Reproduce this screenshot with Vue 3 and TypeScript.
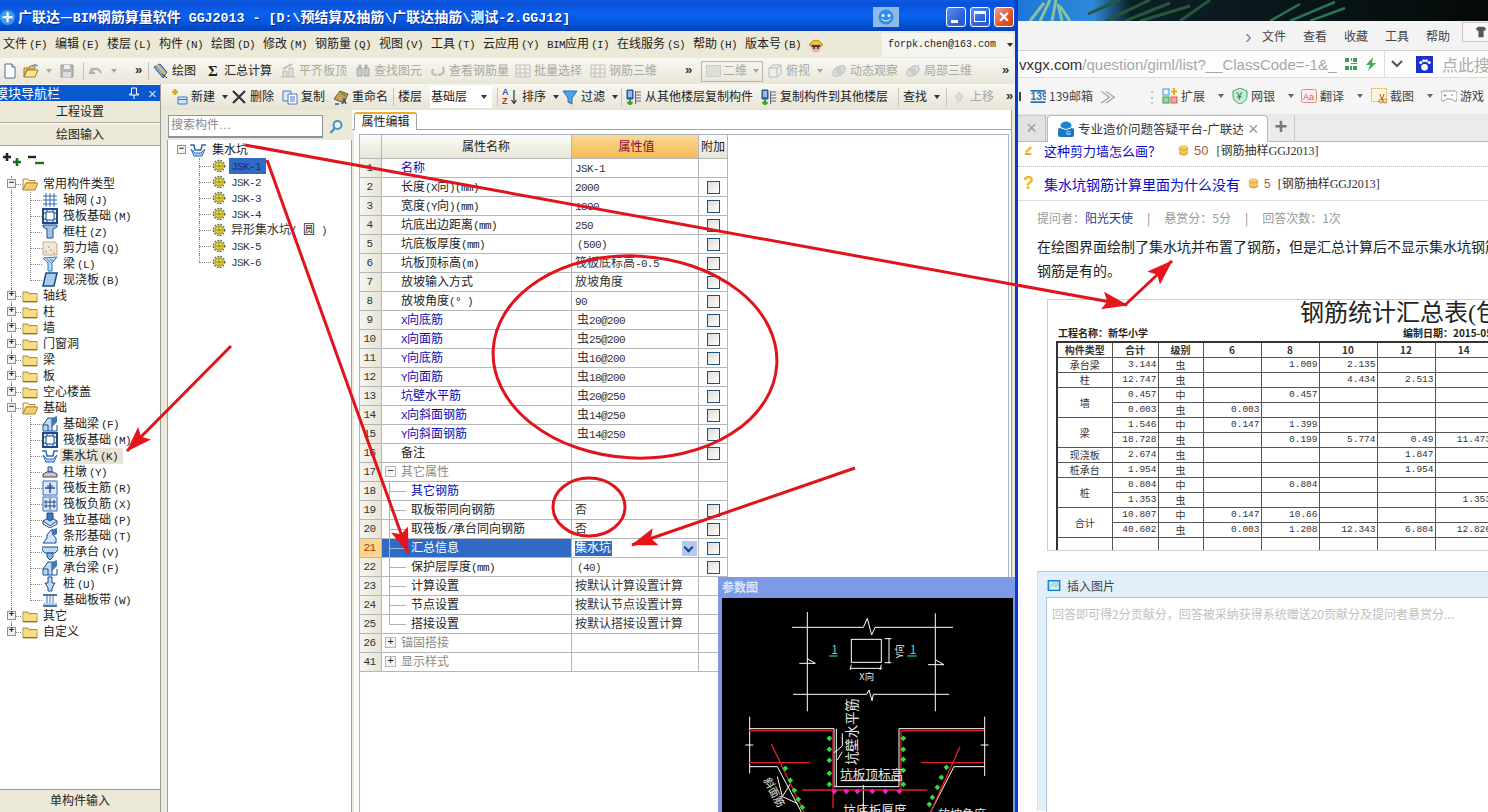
<script setup lang="ts">
interface Bar { x: number; icon?: string; label?: string; caret?: boolean; grey?: boolean; sep?: boolean; chev?: boolean; glyph?: string; combo?: string; sort?: boolean }
const widths = (items: Bar[], end: number) =>
  items.map((it, i) => ({ ...it, w: (i + 1 < items.length ? items[i + 1].x : end) - it.x }))
const seg = (s = '') =>
  s.split(/([\x20-\x7e°]+)/).filter(Boolean).map((t) => ({ t, lat: /^[\x20-\x7e°]/.test(t) }))

const menus = [
  { t: '文件', k: '(F)', x: 3 }, { t: '编辑', k: '(E)', x: 55 }, { t: '楼层', k: '(L)', x: 107 },
  { t: '构件', k: '(N)', x: 159 }, { t: '绘图', k: '(D)', x: 211 }, { t: '修改', k: '(M)', x: 263 },
  { t: '钢筋量', k: '(Q)', x: 315 }, { t: '视图', k: '(V)', x: 379 }, { t: '工具', k: '(T)', x: 431 },
  { t: '云应用', k: '(Y)', x: 483 }, { t: 'BIM应用', k: '(I)', x: 547 }, { t: '在线服务', k: '(S)', x: 617 },
  { t: '帮助', k: '(H)', x: 693 }, { t: '版本号', k: '(B)', x: 745 }
].map((m, i, a) => ({ ...m, w: (i + 1 < a.length ? a[i + 1].x : 807) - m.x }))

const bar1 = widths([
  { x: 2, icon: 'doc' }, { x: 23, icon: 'open', caret: true }, { x: 59, icon: 'save', grey: true },
  { x: 88, icon: 'undo', caret: true, grey: true, sep: true }, { x: 135, chev: true },
  { x: 153, icon: 'draw', label: '绘图', sep: true }, { x: 205, glyph: 'Σ', label: '汇总计算' },
  { x: 280, icon: 'align', label: '平齐板顶', grey: true }, { x: 355, icon: 'find', label: '查找图元', grey: true },
  { x: 430, icon: 'look', label: '查看钢筋量', grey: true }, { x: 515, icon: 'batch', label: '批量选择', grey: true },
  { x: 590, icon: 'batch', label: '钢筋三维', grey: true }, { x: 685, chev: true },
  { x: 701, combo: '二维' }, { x: 767, icon: 'cube', label: '俯视', caret: true, grey: true },
  { x: 831, icon: 'orbit', label: '动态观察', grey: true }, { x: 905, icon: 'orbit', label: '局部三维', grey: true },
  { x: 1002, chev: true }
], 1015)

const bar2 = widths([
  { x: 172, icon: 'add', label: '新建', caret: true }, { x: 231, icon: 'del', label: '删除' },
  { x: 282, icon: 'copy', label: '复制' }, { x: 333, icon: 'rename', label: '重命名' },
  { x: 398, label: '楼层', sep: true },
  { x: 430, combo: '基础层' },
  { x: 502, sort: true, label: '排序', caret: true, sep: true },
  { x: 562, icon: 'funnel', label: '过滤', caret: true },
  { x: 626, icon: 'floors', label: '从其他楼层复制构件', sep: true },
  { x: 761, icon: 'floors', label: '复制构件到其他楼层' },
  { x: 903, label: '查找', caret: true, sep: true },
  { x: 951, icon: 'up', label: '上移', grey: true, sep: true },
  { x: 1006, chev: true }
], 1015)

const navTree = [
  { t: '常用构件类型', open: true, lv: 0 },
  { t: '轴网', k: '(J)', icon: 'grid', lv: 1 }, { t: '筏板基础', k: '(M)', icon: 'raft', lv: 1 },
  { t: '框柱', k: '(Z)', icon: 'col', lv: 1 }, { t: '剪力墙', k: '(Q)', icon: 'wall', lv: 1 },
  { t: '梁', k: '(L)', icon: 'beam', lv: 1 }, { t: '现浇板', k: '(B)', icon: 'slab', lv: 1, last: true },
  { t: '轴线', lv: 0 }, { t: '柱', lv: 0 }, { t: '墙', lv: 0 }, { t: '门窗洞', lv: 0 }, { t: '梁', lv: 0 },
  { t: '板', lv: 0 }, { t: '空心楼盖', lv: 0 }, { t: '基础', open: true, lv: 0 },
  { t: '基础梁', k: '(F)', icon: 'fbeam', lv: 1 }, { t: '筏板基础', k: '(M)', icon: 'raft', lv: 1 },
  { t: '集水坑', k: '(K)', icon: 'pit', lv: 1, sel: true }, { t: '柱墩', k: '(Y)', icon: 'pier', lv: 1 },
  { t: '筏板主筋', k: '(R)', icon: 'main', lv: 1 }, { t: '筏板负筋', k: '(X)', icon: 'neg', lv: 1 },
  { t: '独立基础', k: '(P)', icon: 'iso', lv: 1 }, { t: '条形基础', k: '(T)', icon: 'strip', lv: 1 },
  { t: '桩承台', k: '(V)', icon: 'cap', lv: 1 }, { t: '承台梁', k: '(F)', icon: 'fbeam', lv: 1 },
  { t: '桩', k: '(U)', icon: 'pile', lv: 1 }, { t: '基础板带', k: '(W)', icon: 'band', lv: 1, last: true },
  { t: '其它', lv: 0 }, { t: '自定义', lv: 0, end: true }
]

const parts = ['JSK-1', 'JSK-2', 'JSK-3', 'JSK-4', '异形集水坑( 圆 )', 'JSK-5', 'JSK-6']

interface Row { n: number; name: string; val?: string; blue?: boolean; chk?: boolean; ind?: boolean; group?: string; pad?: boolean; last?: boolean }
const rows: Row[] = [
  { n: 1, name: '名称', val: 'JSK-1', blue: true },
  { n: 2, name: '长度(X向)(mm)', val: '2000', chk: true },
  { n: 3, name: '宽度(Y向)(mm)', val: '1800', chk: true },
  { n: 4, name: '坑底出边距离(mm)', val: '250', chk: true },
  { n: 5, name: '坑底板厚度(mm)', val: '(500)', chk: true, pad: true },
  { n: 6, name: '坑板顶标高(m)', val: '筏板底标高-0.5', chk: true },
  { n: 7, name: '放坡输入方式', val: '放坡角度', chk: true },
  { n: 8, name: '放坡角度(° )', val: '90', chk: true },
  { n: 9, name: 'X向底筋', val: '虫20@200', blue: true, chk: true, pad: true },
  { n: 10, name: 'X向面筋', val: '虫25@200', blue: true, chk: true, pad: true },
  { n: 11, name: 'Y向底筋', val: '虫16@200', blue: true, chk: true, pad: true },
  { n: 12, name: 'Y向面筋', val: '虫18@200', blue: true, chk: true, pad: true },
  { n: 13, name: '坑壁水平筋', val: '虫20@250', blue: true, chk: true, pad: true },
  { n: 14, name: 'X向斜面钢筋', val: '虫14@250', blue: true, chk: true, pad: true },
  { n: 15, name: 'Y向斜面钢筋', val: '虫14@250', blue: true, chk: true, pad: true },
  { n: 16, name: '备注', chk: true },
  { n: 17, name: '其它属性', group: '−' },
  { n: 18, name: '其它钢筋', blue: true, ind: true },
  { n: 19, name: '取板带同向钢筋', val: '否', ind: true, chk: true },
  { n: 20, name: '取筏板/承台同向钢筋', val: '否', ind: true, chk: true },
  { n: 21, name: '汇总信息', val: '集水坑', ind: true, chk: true },
  { n: 22, name: '保护层厚度(mm)', val: '(40)', ind: true, chk: true, pad: true },
  { n: 23, name: '计算设置', val: '按默认计算设置计算', ind: true },
  { n: 24, name: '节点设置', val: '按默认节点设置计算', ind: true },
  { n: 25, name: '搭接设置', val: '按默认搭接设置计算', ind: true, last: true },
  { n: 26, name: '锚固搭接', group: '+' },
  { n: 41, name: '显示样式', group: '+' }
]

const stat = [
  { a: '承台梁', s: 1, t: '3.144', g: '虫', v: ['', '1.009', '2.135', '', ''] },
  { a: '柱', s: 1, t: '12.747', g: '虫', v: ['', '', '4.434', '2.513', ''] },
  { a: '墙', s: 2, t: '0.457', g: '中', v: ['', '0.457', '', '', ''] },
  { t: '0.003', g: '虫', v: ['0.003', '', '', '', ''] },
  { a: '梁', s: 2, t: '1.546', g: '中', v: ['0.147', '1.399', '', '', ''] },
  { t: '18.728', g: '虫', v: ['', '0.199', '5.774', '0.49', '11.473'] },
  { a: '现浇板', s: 1, t: '2.674', g: '虫', v: ['', '', '', '1.847', ''] },
  { a: '桩承台', s: 1, t: '1.954', g: '虫', v: ['', '', '', '1.954', ''] },
  { a: '桩', s: 2, t: '8.804', g: '中', v: ['', '8.804', '', '', ''] },
  { t: '1.353', g: '虫', v: ['', '', '', '', '1.353'] },
  { a: '合计', s: 2, t: '10.807', g: '中', v: ['0.147', '10.66', '', '', ''] },
  { t: '40.602', g: '虫', v: ['0.003', '1.208', '12.343', '6.804', '12.826'] }
]

const greenDots = [[346,505],[346,538],[346,571],[346,610],[346,643],[568,505],[568,538],[568,568],[568,601],[568,643],[214,595],[229,631],[241,661],[253,688],[265,712],[697,592],[682,622],[670,652],[655,682],[646,703]]
const pinkDots = [[361,664],[397,664],[430,664],[475,664],[514,664],[556,664]]
const fronds = [
  'M1030 21 L1044 3 M1040 21 L1050 0 M1052 21 L1056 0 M1062 21 L1058 4 M1070 21 L1060 6',
  'M1105 21 L1150 0 M1125 21 L1170 3 M1140 21 L1190 6 M1180 21 L1210 0 M1088 14 L1120 0',
  'M1270 21 L1300 4 M1290 21 L1335 2 M1310 21 L1345 8'
]
</script>

<template>
  <div class="app">
    <svg class="defs" aria-hidden="true">
      <symbol id="doc" viewBox="0 0 16 16"><path d="M3 1h7l3 3v11H3z" fill="#fff" stroke="#5a6a8a"/><path d="M10 1v3h3" fill="#dde" stroke="#5a6a8a"/></symbol>
      <symbol id="open" viewBox="0 0 16 16"><path d="M1 5h5l1-2h5v3H4L1 14z" fill="#f6d676" stroke="#a07820"/><path d="M1 14l3-7h11l-3 7z" fill="#fbe596" stroke="#a07820"/><path d="M9 3q3-3 6 0" fill="none" stroke="#2a7ad0"/></symbol>
      <symbol id="save" viewBox="0 0 16 16"><path d="M2 2h12v12H2z" fill="#b8b8b8" stroke="#999"/><path d="M5 2h6v4H5z" fill="#eee"/><path d="M4 9h8v5H4z" fill="#ddd"/></symbol>
      <symbol id="undo" viewBox="0 0 16 16"><path d="M4 5l-2 5 5 0M3 9c3-5 8-4 10 1" fill="none" stroke="#b0b0b0" stroke-width="2"/></symbol>
      <symbol id="draw" viewBox="0 0 16 16"><path d="M1 4l6-3 7 8-4 6z" fill="#7fa6d8" stroke="#2e5b98"/><path d="M4 2l8 9" stroke="#e8c050" stroke-width="2"/><path d="M9 11l5 4" stroke="#333"/></symbol>
      <symbol id="align" viewBox="0 0 16 16"><path d="M1 14h14M3 14V8h4v6M9 14V5h4v9" fill="#ddd" stroke="#bbb"/><path d="M3 6l9-5" stroke="#bbb" stroke-width="2"/></symbol>
      <symbol id="find" viewBox="0 0 16 16"><path d="M2 5h5v8H2zM9 5h5v8H9zM4 2h2v3H4zM10 2h2v3h-2z" fill="#c8c8c8" stroke="#aaa"/></symbol>
      <symbol id="look" viewBox="0 0 16 16"><path d="M3 6q-3 6 4 6M13 4q3 7-5 8" fill="none" stroke="#b8b8b8" stroke-width="2"/></symbol>
      <symbol id="batch" viewBox="0 0 16 16"><path d="M1 2h14v12H1zM1 6h14M1 10h14M5 2v12M10 2v12" fill="none" stroke="#c0c0c0"/></symbol>
      <symbol id="cube" viewBox="0 0 16 16"><path d="M2 5l4-3h8v9l-4 3H2zM2 5h8v9M10 5l4-3" fill="#eee" stroke="#bbb"/></symbol>
      <symbol id="orbit" viewBox="0 0 16 16"><ellipse cx="8" cy="8" rx="7" ry="4" fill="#ddd" stroke="#bbb" transform="rotate(-35 8 8)"/><circle cx="8" cy="8" r="3" fill="#ccc"/></symbol>
      <symbol id="add" viewBox="0 0 16 16"><path d="M6 8h9v7H6z" fill="#cfe3fa" stroke="#4a78b8"/><path d="M6 10.500h9" stroke="#4a78b8"/><path d="M3 0v6M0 3h6" stroke="#d8a820" stroke-width="2.500"/></symbol>
      <symbol id="del" viewBox="0 0 16 16"><path d="M2 2l12 12M14 2L2 14" stroke="#333" stroke-width="2.200"/></symbol>
      <symbol id="copy" viewBox="0 0 16 16"><path d="M1 2h8v10H1z" fill="#dfe9f8" stroke="#4a78b8"/><path d="M6 5h9v10H6z" fill="#fff" stroke="#4a78b8"/><path d="M8 8h5M8 10h5M8 12h5" stroke="#4a78b8"/></symbol>
      <symbol id="rename" viewBox="0 0 16 16"><path d="M1 10l6-8 8 3-4 9z" fill="#c8a058" stroke="#7a5a20"/><path d="M8 4l5 3" stroke="#5a9a40" stroke-width="2"/><path d="M9 15l2-5 2 5M2 15h4" stroke="#2e5b98" fill="none" stroke-width="1.500"/></symbol>
      <symbol id="funnel" viewBox="0 0 16 16"><path d="M1 2h14L10 9v6l-4-2V9z" fill="#4ea4e8" stroke="#2a6ab0"/></symbol>
      <symbol id="floors" viewBox="0 0 16 16"><path d="M1 1h6v9H1z" fill="#3a72c0" stroke="#234f90"/><path d="M2 3h4M2 5h4M2 7h4" stroke="#fff"/><path d="M10 3h5M10 6h5M10 9h5M10 12h5M9.500 2v13" stroke="#667" fill="none"/><path d="M4 10v5M1.500 13l2.500 2.500 2.500-2.500" stroke="#3aa030" fill="none" stroke-width="2"/></symbol>
      <symbol id="up" viewBox="0 0 16 16"><path d="M8 3l4 5H10v4H6V8H4z" fill="#ddd" stroke="#ccc"/></symbol>
      <symbol id="folder" viewBox="0 0 16 16"><path d="M1 4h5l1 1.500h8V14H1z" fill="#f3d377" stroke="#a88a40"/><path d="M1.500 6h13v7.500h-13z" fill="#f8da80"/><path d="M1 13.500h14" stroke="#9a7020"/></symbol>
      <symbol id="folderOpen" viewBox="0 0 16 16"><path d="M1 3h5l1 1.500h6V7H4l-3 7z" fill="#fff4c8" stroke="#a88a40"/><path d="M1 14l3-7h12l-3 7z" fill="#f4cc68" stroke="#a88a40"/></symbol>
      <symbol id="grid" viewBox="0 0 16 16"><path d="M1 4h14M1 8h14M1 12h14M4 1v14M8 1v14M12 1v14" stroke="#2e6ab8" fill="none"/></symbol>
      <symbol id="raft" viewBox="0 0 16 16"><path d="M1 1h14v14H1z" fill="#e4ecf8" stroke="#1e4a88" stroke-width="2"/><path d="M4 4h8v8H4zM1 5h3M1 11h3M12 5h3M12 11h3M5 1v3M11 1v3M5 12v3M11 12v3" fill="#fff" stroke="#1e4a88"/></symbol>
      <symbol id="col" viewBox="0 0 16 16"><path d="M1 1h14v2l-4 2v9H5V5L1 3z" fill="#9ec4ec" stroke="#1e4a88"/></symbol>
      <symbol id="wall" viewBox="0 0 16 16"><path d="M1 2h12l2 2v11H1z" fill="#f6e4d4" stroke="#c8a890"/><path d="M3 12h2M8 10h2M11 13h2M6 7h2" stroke="#8a9ab0"/></symbol>
      <symbol id="beam" viewBox="0 0 16 16"><path d="M1 2l14-1-5 6v8H6V7z" fill="#bcdaf4" stroke="#3a78b8"/><path d="M8 3l4 3M5 3l4 4" stroke="#3a78b8"/></symbol>
      <symbol id="slab" viewBox="0 0 16 16"><path d="M4 1h11l-3 13H1z" fill="#a6cef0" stroke="#1e4a88" stroke-width="1.500"/></symbol>
      <symbol id="fbeam" viewBox="0 0 16 16"><path d="M1 15V9l5-7h4v13z" fill="#bcdaf4" stroke="#1e4a88"/><path d="M10 2l5-2v6l-5 5" fill="#3a78b8"/><path d="M6 15V9h-5M10 15h5V9" fill="none" stroke="#1e4a88"/></symbol>
      <symbol id="pit" viewBox="0 0 16 16"><path d="M0 3h4l1 5h6l1-5h4" fill="none" stroke="#2e6ab8" stroke-width="1.500"/><path d="M1 7l3 7h8l3-7-4 4H5z" fill="#a6cef0" stroke="#2e6ab8"/></symbol>
      <symbol id="pier" viewBox="0 0 16 16"><path d="M6 3h4v5H6z" fill="#a8c4e4" stroke="#234f90"/><path d="M1 10l4-2h6l4 2v3H1z" fill="#c8c8c8" stroke="#445"/></symbol>
      <symbol id="main" viewBox="0 0 16 16"><path d="M1 1h14v14H1z" fill="#dce8f8" stroke="#2e6ab8"/><path d="M8 3v10M3 8h10" stroke="#1e4a88" stroke-width="1.400"/><path d="M5 6h6" stroke="#1e4a88"/></symbol>
      <symbol id="neg" viewBox="0 0 16 16"><path d="M1 1h14v14H1z" fill="#dce8f8" stroke="#2e6ab8"/><path d="M8 2v12M2 6h12M2 10h12M4 4v8M12 4v8" stroke="#1e4a88"/></symbol>
      <symbol id="iso" viewBox="0 0 16 16"><path d="M1 9l7-4 7 4-7 5z" fill="#bcdaf4" stroke="#1e4a88"/><path d="M1 9v3l7 4 7-4V9" fill="none" stroke="#1e4a88"/><path d="M5 1h6v6L8 9 5 7z" fill="#3a78b8" stroke="#1e4a88"/></symbol>
      <symbol id="strip" viewBox="0 0 16 16"><path d="M1 15l4-5V7l4-5h2v5l3 3v5z" fill="#cfe3fa" stroke="#1e4a88"/><path d="M9 2l6-2v6l-4 2" fill="#3a78b8"/></symbol>
      <symbol id="cap" viewBox="0 0 16 16"><path d="M0 3h16v3l-3 3H3L0 6z" fill="#bcdaf4" stroke="#1e4a88"/><path d="M5 9h6v4l-3 3-3-3z" fill="#88b0dc" stroke="#1e4a88"/></symbol>
      <symbol id="pile" viewBox="0 0 16 16"><path d="M6 1h4v6h3l-3 5v3H6v-3L3 7h3z" fill="#bcdaf4" stroke="#1e4a88"/></symbol>
      <symbol id="band" viewBox="0 0 16 16"><path d="M1 3h14M1 14h14" stroke="#1e4a88" stroke-width="1.500"/><path d="M5 3v11M8 3v11M11 3v11" stroke="#2e6ab8"/><path d="M1 12h14" stroke="#a6cef0" stroke-width="2"/></symbol>
      <symbol id="gear" viewBox="0 0 16 16"><circle cx="8" cy="8" r="6.500" fill="none" stroke="#5a6a2a" stroke-width="1.500" stroke-dasharray="2 1.500"/><circle cx="8" cy="8" r="4.800" fill="#eedc30" stroke="#6a6a20"/><path d="M4 8h8M8 4v8" stroke="#8a7a20"/></symbol>
      <symbol id="coin" viewBox="0 0 16 16"><ellipse cx="8" cy="4" rx="6" ry="2.500" fill="#fce7a0" stroke="#d09020"/><path d="M2 4v8c0 3.400 12 3.400 12 0V4" fill="#f4b840" stroke="#d09020"/><path d="M2 8c0 3.400 12 3.400 12 0" fill="none" stroke="#fff0b0"/></symbol>
    </svg>

    <!-- 软件窗口 -->
    <section class="win">
      <header class="title">
        <span class="logo">✛</span>
        <span class="title-text">广联达—<b class="mono">BIM</b>钢筋算量软件<b class="mono"> GGJ2013 - [D:\</b>预结算及抽筋<b class="mono">\</b>广联达抽筋<b class="mono">\</b>测试<b class="mono">-2.GGJ12]</b></span>
        <span class="smile">
          <svg viewBox="0 0 24 18" width="24" height="18"><circle cx="12" cy="9" r="7.500" fill="#2f8fe8"/><circle cx="9" cy="7.500" r="1.500" fill="#fff"/><circle cx="15" cy="7.500" r="1.500" fill="#fff"/><path d="M7.500 11q4.500 4 9 0" stroke="#fff" fill="none"/></svg>
        </span>
        <span class="wbtn"><i class="wmin"></i></span>
        <span class="wbtn"><i class="wmax"></i></span>
        <span class="wbtn close">×</span>
      </header>

      <nav class="menu">
        <span v-for="m in menus" :key="m.x" class="menu-item" :style="{ width: m.w + 'px' }"><span v-for="(x, i) in seg(m.t)" :key="i" :class="{ lat: x.lat }">{{ x.t }}</span><em>{{ m.k }}</em></span>
        <svg class="hat" viewBox="0 0 18 18" width="18" height="18"><path d="M2 9q7-10 14 0z" fill="#f4c820" stroke="#b89010"/><circle cx="9" cy="12" r="4.500" fill="#e8b898"/><path d="M5 9h8l1 2H4z" fill="#58382a"/><circle cx="7" cy="12" r="1" fill="#222"/><circle cx="11" cy="12" r="1" fill="#222"/></svg>
        <span class="account">forpk.chen@163.com<i class="caret dark"></i></span>
      </nav>

      <div class="bar bar1">
        <span v-for="b in bar1" :key="b.x" class="tool" :class="{ grey: b.grey, sep: b.sep, chev: b.chev }" :style="{ width: b.w + 'px' }">
          <span v-if="b.chev">»</span>
          <span v-else-if="b.combo" class="combo"><i class="combo-ic"></i>{{ b.combo }}<i class="caret"></i></span>
          <template v-else>
            <svg v-if="b.icon" class="ic"><use :href="'#' + b.icon" /></svg>
            <b v-if="b.glyph" class="glyph">{{ b.glyph }}</b>
            <span v-if="b.label">{{ b.label }}</span>
            <i v-if="b.caret" class="caret"></i>
          </template>
        </span>
      </div>

      <div class="work">
        <aside class="nav">
          <div class="nav-head">
            <span class="nav-title">模块导航栏</span>
            <svg class="pin" viewBox="0 0 10 12" width="10" height="12"><path d="M2.500 1h5v6h2v1H.5V7h2zM5 8v4" fill="none" stroke="#fff"/></svg>
            <span class="nav-x">×</span>
          </div>
          <div class="nav-btn">工程设置</div>
          <div class="nav-btn">绘图输入</div>
          <div class="nav-tools">
            <svg viewBox="0 0 20 14" width="20" height="14"><path d="M4 0v8M0 4h8" stroke="#222" stroke-width="2.600"/><path d="M14 5v8M10 9h8" stroke="#187018" stroke-width="2.600"/></svg>
            <svg viewBox="0 0 20 14" width="20" height="14"><path d="M1 4h8" stroke="#222" stroke-width="2.400"/><path d="M8 10h9" stroke="#187018" stroke-width="2.400"/></svg>
          </div>
          <div class="nav-tree">
            <div v-for="(r, i) in navTree" :key="i" class="nrow" :class="{ child: r.lv === 1, last: r.last, nolast: !r.end, rootend: r.end }">
              <template v-if="r.lv === 0">
                <i class="exp">{{ r.open ? '−' : '+' }}</i>
                <svg class="ic folder"><use :href="r.open ? '#folderOpen' : '#folder'" /></svg>
                <span class="ntext">{{ r.t }}</span>
              </template>
              <template v-else>
                <svg class="ic nic"><use :href="'#' + r.icon" /></svg>
                <span class="ntext" :class="{ picked: r.sel }">{{ r.t }}<em>{{ r.k }}</em></span>
              </template>
            </div>
          </div>
          <div class="nav-btn foot">单构件输入</div>
        </aside>

        <div class="main">
          <div class="bar bar2">
            <span v-for="b in bar2" :key="b.x" class="tool" :class="{ grey: b.grey, sep: b.sep, chev: b.chev }" :style="{ width: b.w + 'px' }">
              <span v-if="b.chev">»</span>
              <span v-else-if="b.combo" class="combo2">{{ b.combo }}<i class="caret dark"></i></span>
              <template v-else>
                <span v-if="b.sort" class="az"><b class="az-a">A</b><b class="az-z">Z</b><svg viewBox="0 0 6 14" width="6" height="14" class="az-arrow"><path d="M3 0v13M.5 10L3 13.500 5.500 10" stroke="#333" stroke-width="1.200" fill="none"/></svg></span>
                <svg v-if="b.icon" class="ic"><use :href="'#' + b.icon" /></svg>
                <span v-if="b.label">{{ b.label }}</span>
                <i v-if="b.caret" class="caret dark"></i>
              </template>
            </span>
          </div>

          <div class="split">
            <div class="tree-col">
              <div class="search">
                <span class="search-box">搜索构件…</span>
                <svg class="lens" viewBox="0 0 16 16" width="16" height="16"><circle cx="9.500" cy="6" r="4" fill="#e8f2fb" stroke="#4a90c8" stroke-width="2"/><path d="M6.500 9.500L2.500 14" stroke="#4a90c8" stroke-width="2.500"/></svg>
              </div>
              <div class="parts">
                <div class="proot">
                  <i class="exp">−</i>
                  <svg class="ic"><use href="#pit" /></svg>
                  <span>集水坑</span>
                </div>
                <div v-for="(p, i) in parts" :key="p" class="pitem" :class="{ lastp: i === parts.length - 1 }">
                  <svg class="gear"><use href="#gear" /></svg>
                  <span class="ptext" :class="{ on: i === 0 }"><span v-for="(x, j) in seg(p)" :key="j" :class="{ lat: x.lat }">{{ x.t }}</span></span>
                </div>
              </div>
            </div>

            <div class="prop">
              <div class="tabs"><span class="tab">属性编辑</span></div>
              <div class="sheet">
                <div class="grid head">
                  <span class="c-n"></span>
                  <span class="c-name h">属性名称</span>
                  <span class="c-val hv">属性值</span>
                  <span class="c-add h">附加</span>
                </div>
                <div v-for="r in rows" :key="r.n" class="grid" :class="{ cur: r.n === 21 }">
                  <span class="c-n lat">{{ r.n }}</span>
                  <span class="c-name" :class="{ blue: r.blue, ind: r.ind, grp: r.group, lastind: r.last }">
                    <i v-if="r.group" class="gexp">{{ r.group }}</i>
                    <span class="txt"><span v-for="(x, i) in seg(r.name)" :key="i" :class="{ lat: x.lat }">{{ x.t }}</span></span>
                  </span>
                  <span class="c-val" :class="{ pad: r.pad }">
                    <span class="txt" :class="{ seltext: r.n === 21 }"><span v-for="(x, i) in seg(r.val)" :key="i" :class="{ lat: x.lat }">{{ x.t }}</span></span>
                    <i v-if="r.n === 21" class="ddbtn"></i>
                  </span>
                  <span class="c-add"><i v-if="r.chk" class="chk"></i></span>
                </div>
              </div>
            </div>
          </div>
        </div>
      </div>

      <!-- 浮动参数图窗口 -->
      <div class="param">
        <div class="param-title">参数图</div>
        <svg class="cad" viewBox="24 84 873 642">
          <g fill="none" stroke="#fff" stroke-width="3">
            <polyline points="234,172 448,172 460,145 473,195 483,172 717,172" />
            <polyline points="237,373 458,373 465,360 474,392 478,373 705,373" />
            <path d="M280 126V424M664 130V424M256 280h48l-24-14M642 284h48l-24-14" />
            <rect x="412" y="208" width="90" height="69" />
            <path d="M525 204V280M512 206h20M512 278h20M408 295H505M412 284l-4 16M502 284l-4 16" />
            <path d="M107 440V610M812 440V618M105 476H360V650H555V476H812M105 590H190L262 726M812 590H720L650 726" />
            <path d="M94 525h24M800 525h24M367 476V650M361 548L385 528V490M370 570L385 545M380 632H565M448 645V726M190 620L205 680L250 700M205 680L230 640" />
          </g>
          <g fill="none" stroke="#e0202a" stroke-width="4">
            <path d="M105 482H355M560 482H810M105 578H288M622 578H810M265 660H640M357 482V715M561 482V660M172 522L270 726M738 530L650 726" />
          </g>
          <g fill="#28e040">
            <rect v-for="d in greenDots" :key="d.join()" :x="d[0] - 6" :y="d[1] - 6" width="12" height="12" :transform="`rotate(45 ${d[0]} ${d[1]})`" />
          </g>
          <g fill="#f020d0">
            <rect v-for="d in pinkDots" :key="d.join()" :x="d[0] - 6" :y="d[1] - 6" width="12" height="12" :transform="`rotate(45 ${d[0]} ${d[1]})`" />
          </g>
          <g class="cad-cyan" fill="#38e0d8" stroke="#38e0d8" stroke-width="3">
            <path d="M345 258h26M580 258h28" />
            <text x="352" y="252" font-size="36" stroke="none">1</text>
            <text x="587" y="252" font-size="36" stroke="none">1</text>
          </g>
          <g fill="#e8e8e8" class="cad-text">
            <text x="436" y="330" font-size="28">X向</text>
            <text transform="translate(566 265) rotate(-90)" font-size="28">Y向</text>
            <text transform="translate(428 585) rotate(-90)" font-size="40">坑壁水平筋</text>
            <text x="378" y="628" font-size="38">坑板顶标高</text>
            <text x="388" y="736" font-size="38">坑底板厚度</text>
            <text transform="translate(148 630) rotate(62)" font-size="32">斜面筋</text>
            <text x="672" y="746" font-size="36">放坡角度</text>
          </g>
        </svg>
      </div>
    </section>

    <!-- 浏览器 -->
    <section class="browser">
      <div class="wall">
        <svg viewBox="1018 0 470 21" width="470" height="21" preserveAspectRatio="none">
          <defs>
            <linearGradient id="sky" x1="0" x2="1" y1="0" y2="0">
              <stop offset="0" stop-color="#1c78d8" /><stop offset="0.16" stop-color="#2e88d8" /><stop offset="0.24" stop-color="#0c2028" /><stop offset="1" stop-color="#050a08" />
            </linearGradient>
          </defs>
          <rect x="1018" y="0" width="470" height="21" fill="url(#sky)" />
          <path :d="fronds[0]" stroke="#88c0a0" stroke-width="3" fill="none" />
          <path :d="fronds[1]" stroke="#245838" stroke-width="3" fill="none" />
          <path :d="fronds[2]" stroke="#2a7258" stroke-width="2.500" fill="none" />
        </svg>
      </div>

      <div class="bmenu">
        <span class="gt">›</span>
        <span>文件</span><span>查看</span><span>收藏</span><span>工具</span><span>帮助</span>
        <span class="skin">
          <svg viewBox="0 0 14 14" width="12" height="12"><path d="M1 3l3-2h6l3 2-2 3-1-1v8H4V5L3 6z" fill="#555" /></svg>
        </span>
      </div>

      <div class="addr">
        <span class="url"><b>vxgx.com</b>/question/giml/list?__ClassCode=-1&amp;__]</span>
        <svg viewBox="0 0 14 14" width="14" height="14" class="qr"><path d="M1 1h4v4H1zM9 1h4v4H9zM1 9h4v4H1zM7 1h1v3H7zM7 6h6v1H7zM9 9h4v4H9zM6 9h2v4H6z" fill="#3ca050" /></svg>
        <svg viewBox="0 0 14 14" width="14" height="16" class="bolt"><path d="M9 0L2 8h4l-2 6 8-8H8z" fill="#3cb050" /></svg>
        <span class="addr-sep"><svg viewBox="0 0 14 10" width="14" height="10"><path d="M2 2l5 5 5-5" stroke="#555" stroke-width="2" fill="none" /></svg></span>
        <svg viewBox="0 0 18 18" width="17" height="17" class="paw"><rect width="18" height="18" fill="#1a30c8" /><circle cx="9" cy="12" r="3.500" fill="#fff" /><circle cx="5" cy="7" r="1.600" fill="#fff" /><circle cx="8" cy="5" r="1.600" fill="#fff" /><circle cx="11" cy="5" r="1.600" fill="#fff" /><circle cx="14" cy="7" r="1.600" fill="#fff" /></svg>
        <span class="search-hint">点此搜索</span>
      </div>

      <div class="marks">
        <i class="mstub"></i>
        <svg viewBox="0 0 16 14" width="16" height="13" class="m139"><path d="M0 1h16M0 13h16" stroke="#2a70c0" stroke-width="2" /><text x="0" y="11" font-size="11" font-weight="700" fill="#2a70c0" font-family="Liberation Sans">139</text></svg>
        <span class="mtxt">139邮箱</span>
        <span class="mmore">≫</span>
        <span class="mdots">⋮</span>
        <span class="mk m-ext"><svg viewBox="0 0 16 16" width="16" height="16"><rect x="1" y="1" width="6" height="6" fill="none" stroke="#3a9ad8" /><rect x="1" y="9" width="6" height="6" fill="#9ad8a0" stroke="#3a9a50" /><rect x="9" y="9" width="6" height="6" fill="#f0a8a0" stroke="#d05a50" /><path d="M12 0v7M9 3.500h6" stroke="#e8b020" stroke-width="2" /></svg>扩展<i class="caret dark"></i></span>
        <span class="mk m-bank"><svg viewBox="0 0 16 16" width="16" height="16"><path d="M8 0l7 3v5c0 4-4 7-7 8-3-1-7-4-7-8V3z" fill="#c8ecd4" stroke="#38a868" /><text x="4.500" y="12" font-size="10" fill="#1a8848" font-family="Liberation Sans">¥</text></svg>网银<i class="caret dark"></i></span>
        <span class="mk m-tr"><svg viewBox="0 0 16 16" width="16" height="16"><rect x="0.500" y="1.500" width="15" height="13" rx="2" fill="#fdeeee" stroke="#e08a8a" /><text x="2" y="12" font-size="9" fill="#d05a5a" font-family="Liberation Sans">Aa</text></svg>翻译<i class="caret dark"></i></span>
        <span class="mk m-cut"><svg viewBox="0 0 16 16" width="16" height="16"><rect x="0.500" y="0.500" width="15" height="13" fill="#fdf4e0" stroke="#e0b050" stroke-dasharray="2 1" /><circle cx="10" cy="13" r="2" fill="none" stroke="#d08020" /><circle cx="14" cy="13" r="2" fill="none" stroke="#d08020" /><path d="M9 6l2 6M13 6l-2 6" stroke="#a06018" /></svg>截图<i class="caret dark"></i></span>
        <span class="mk m-game"><svg viewBox="0 0 16 16" width="16" height="16"><path d="M2 3h12q2 0 2 3v5q0 3-3 2l-2-2H5l-2 2q-3 1-3-2V6q0-3 2-3z" fill="#fff" stroke="#999" /><path d="M4 6v3M2.500 7.500h3" stroke="#999" /><circle cx="11" cy="7" r="1" fill="#e0a020" /></svg>游戏</span>
      </div>

      <div class="btabs">
        <span class="btab-off">×</span>
        <span class="btab">
          <svg viewBox="0 0 16 16" width="16" height="18"><ellipse cx="8" cy="4.500" rx="5.500" ry="4" fill="#1a88d0" /><rect x="0" y="7" width="16" height="9" rx="2" fill="#1878c0" /><path d="M3 7q5 3 10 0" stroke="#fff" fill="none" /><text x="8" y="14" font-size="6" fill="#fff" font-family="Liberation Sans">G</text></svg>
          <span class="btab-text">专业造价问题答疑平台-广联达</span>
          <span class="btab-x">×</span>
        </span>
        <span class="btab-plus">+</span>
      </div>

      <div class="page">
        <div class="q q1">
          <svg viewBox="0 0 10 12" width="9" height="11" class="pencil"><path d="M1 7l6-6 2 2-6 6z" fill="#e8c040" /><path d="M1 10h7" stroke="#e8a020" stroke-width="2" /></svg>
          <a class="qa s13">这种剪力墙怎么画？</a>
          <svg class="coin"><use href="#coin" /></svg>
          <span class="score">50</span>
          <span class="qtag">[钢筋抽样GGJ2013]</span>
        </div>
        <div class="q q2">
          <b class="mark">?</b>
          <a class="qa s14">集水坑钢筋计算里面为什么没有</a>
          <svg class="coin"><use href="#coin" /></svg>
          <span class="score">5</span>
          <span class="qtag">[钢筋抽样GGJ2013]</span>
        </div>
        <div class="meta">提问者：<a>阳光天使</a><i>|</i>悬赏分：5分<i>|</i>回答次数：1次</div>
        <p class="body">在绘图界面绘制了集水坑并布置了钢筋，但是汇总计算后不显示集水坑钢筋量，而<br />钢筋是有的。</p>

        <figure class="sheet-img">
          <h3>钢筋统计汇总表(包含损耗)</h3>
          <div class="sinfo"><span>工程名称：新华小学</span><span class="sdate">编制日期：2015-05-20</span></div>
          <table class="stat">
            <colgroup><col class="w55" /><col class="w46" /><col class="w45" /><col class="w58" /><col class="w58" /><col class="w58" /><col class="w58" /><col class="w58" /></colgroup>
            <thead><tr><th>构件类型</th><th>合计</th><th>级别</th><th>6</th><th>8</th><th>10</th><th>12</th><th>14</th></tr></thead>
            <tbody>
              <tr v-for="(r, i) in stat" :key="i">
                <td v-if="r.a" :rowspan="r.s" class="ctr">{{ r.a }}</td>
                <td class="num">{{ r.t }}</td>
                <td class="ctr">{{ r.g }}</td>
                <td v-for="(v, j) in r.v" :key="j" class="num">{{ v }}</td>
              </tr>
              <tr class="blank"><td></td><td></td><td></td><td></td><td></td><td></td><td></td><td></td></tr>
            </tbody>
          </table>
        </figure>

        <div class="answer">
          <div class="ans-head">
            <svg viewBox="0 0 14 12" width="14" height="11"><rect width="14" height="12" fill="#1c7cc0" /><rect x="1.500" y="1.500" width="11" height="9" fill="#a8dcf0" /><path d="M2 10l4-3 3 2 3-2v3z" fill="#e8f8d8" /><circle cx="4" cy="3.500" r="1" fill="#fff" /></svg>
            插入图片
          </div>
          <div class="ans-box">回答即可得2分贡献分，回答被采纳获得系统赠送20贡献分及提问者悬赏分...</div>
        </div>
      </div>
    </section>

    <!-- 红色标注 -->
    <svg class="marks-layer" viewBox="0 0 1488 812">
      <defs>
        <marker id="headL" viewBox="0 0 26 18" refX="25" refY="9" markerWidth="26" markerHeight="18" markerUnits="userSpaceOnUse" orient="auto">
          <path d="M0 0L26 9L0 18L5 9z" fill="#e8141c" />
        </marker>
      </defs>
      <g fill="none" stroke="#e0141c" stroke-width="3">
        <path d="M245 145L1127 305" marker-end="url(#headL)" />
        <path d="M1125 305L1172 261" marker-end="url(#headL)" />
        <path d="M267 160L408 553" marker-end="url(#headL)" />
        <path d="M231 346L127 451" marker-end="url(#headL)" />
        <path d="M855 468L632 545" marker-end="url(#headL)" />
        <ellipse cx="635" cy="357" rx="142" ry="101" transform="rotate(3 635 357)" />
        <ellipse cx="589" cy="507" rx="36" ry="29" />
      </g>
    </svg>
  </div>
</template>

<style>
html, body { margin: 0; padding: 0; background: #fff; overflow: hidden; }
</style>

<style scoped>
.app {
  position: relative; width: 1488px; height: 812px; overflow: hidden; display: flex;
  font: 12px/1 "Liberation Serif", "Noto Sans CJK SC", sans-serif; color: #222;
}
.defs { position: absolute; width: 0; height: 0; }
.ic { width: 16px; height: 16px; flex: none; display: block; }
em { font: normal 11px "Liberation Mono", monospace; letter-spacing: -0.6px; margin-left: 2px; }
.lat { font: 11px/1 "Liberation Mono", monospace; letter-spacing: -0.6px; white-space: pre; }
.txt { white-space: nowrap; }

/* window */
.win { position: relative; flex: none; width: 1018px; height: 812px; box-sizing: border-box; border-right: 3px solid #0a3ad0; background: #fff; display: flex; flex-direction: column; overflow: hidden; }
.title { flex: none; height: 31px; box-sizing: border-box; padding-top: 3px; background: linear-gradient(#0a5ae0 0, #0a50d8 12%, #0a62f0 45%, #0452d6 80%, #0340b8 100%); display: flex; align-items: center; color: #fff; }
.logo { width: 15px; height: 15px; flex: none; margin-right: 3px; background: #3a9be8; border-radius: 8px; text-align: center; font: 700 13px/15px "Liberation Sans"; }
.title-text { flex: none; width: 855px; font-size: 14px; font-weight: 700; text-shadow: 1px 1px 0 #0a2a90; white-space: pre; font-family: "Noto Sans CJK SC", sans-serif; }
.mono { font: 700 13.3px "Liberation Mono", monospace; }
.smile { flex: none; width: 26px; height: 20px; background: #8fb8e8; display: flex; justify-content: center; align-items: center; margin-right: 47px; }
.wbtn { flex: none; width: 20px; height: 20px; margin-right: 4px; box-sizing: border-box; border: 1px solid #fff; border-radius: 3px; background: linear-gradient(135deg, #5a90f0, #2a5ed8 70%); color: #fff; position: relative; font: 700 18px/18px "Liberation Sans"; text-align: center; }
.close { background: linear-gradient(135deg, #f0a090, #d84a20 70%); }
.wmin { position: absolute; left: 4px; bottom: 3px; width: 7px; height: 3px; background: #fff; }
.wmax { position: absolute; left: 3px; top: 3px; width: 12px; height: 11px; box-sizing: border-box; border: 1px solid #fff; border-top-width: 3px; }

.menu { flex: none; height: 27px; background: #ece9d8; display: flex; align-items: center; padding-left: 3px; }
.menu-item { flex: none; white-space: nowrap; }
.hat { flex: none; margin-right: 57px; }
.account { flex: none; width: 131px; height: 24px; background: #f5f4ee; display: flex; align-items: center; padding-left: 6px; box-sizing: border-box; font: 10px "Liberation Mono", monospace; gap: 7px; white-space: nowrap; }

.bar { display: flex; align-items: center; }
.bar1 { flex: none; height: 26px; padding-left: 2px; background: linear-gradient(#f8f7f1, #e9e6d8); }
.bar2 { flex: none; height: 26px; background: linear-gradient(#f8f7f1, #e6e3d4); padding-left: 11px; }
.tool { flex: none; display: flex; align-items: center; gap: 3px; height: 22px; box-sizing: border-box; white-space: nowrap; position: relative; }
.tool.sep::before { content: ""; position: absolute; left: -5px; top: 2px; bottom: 2px; width: 1px; background: #c8c5b4; }
.grey { color: #a9a9a2; }
.chev { font: 700 13px/1 "Liberation Sans"; justify-content: flex-start; padding-bottom: 4px; color: #333; }
.glyph { font: 700 15px "Liberation Serif"; width: 16px; text-align: center; }
.az { flex: none; width: 17px; height: 18px; display: grid; grid-template-columns: 9px 6px; grid-template-rows: 9px 9px; font: 700 9px/9px "Liberation Sans"; }
.az-a { color: #2a5eb0; grid-column: 1; grid-row: 1; }
.az-z { color: #b83030; grid-column: 1; grid-row: 2; }
.az-arrow { grid-column: 2; grid-row: 1 / 3; align-self: center; }
.caret { display: inline-block; width: 0; height: 0; margin-left: 4px; border: 3px solid transparent; border-top: 4px solid #a9a9a2; border-bottom: 0; }
.caret.dark { border-top-color: #333; }
.combo { display: flex; align-items: center; gap: 2px; width: 62px; height: 21px; box-sizing: border-box; border: 1px solid #b8b6a8; padding-left: 4px; color: #a9a9a2; }
.combo-ic { width: 13px; height: 10px; background: #e0dfd4; border: 1px solid #ccc; }
.combo2 { display: flex; align-items: center; justify-content: space-between; width: 62px; height: 22px; box-sizing: border-box; padding: 0 5px 0 1px; background: #fff; }

.work { flex: 1; min-height: 0; display: flex; }
.nav { flex: none; width: 161px; display: flex; flex-direction: column; box-sizing: border-box; border-right: 1px solid #9a9a9a; background: #fff; }
.nav-head { flex: none; height: 16px; margin-top: 1px; background: #0a58d0; color: #fff; display: flex; align-items: center; position: relative; }
.nav-title { flex: none; width: 128px; margin-left: -5px; font-size: 13px; white-space: nowrap; }
.pin { flex: none; margin-left: 6px; }
.nav-x { flex: none; font: 15px/1 "Liberation Sans"; margin-left: 9px; opacity: 0.8; }
.nav-btn { flex: none; height: 22px; line-height: 22px; margin-bottom: 1px; background: #ece9d8; text-align: center; border-bottom: 1px solid #aaa79a; box-sizing: border-box; }
.nav-tools { flex: none; height: 24px; padding-left: 3px; display: flex; align-items: center; gap: 4px; background: #fff; box-sizing: border-box; padding-top: 2px; }
.nav-tree { flex: 1; min-height: 0; padding-top: 5px; overflow: hidden; }
.foot { height: 23px; margin: 0; border-top: 1px solid #9a9a9a; border-bottom: 0; line-height: 22px; }
.nrow { height: 16px; display: flex; align-items: center; position: relative; padding-left: 22px; }
.nrow.nolast::before { content: ""; position: absolute; left: 11px; top: 0; height: 16px; border-left: 1px dotted #8a8a8a; }
.nrow.rootend::before { content: ""; position: absolute; left: 11px; top: 0; height: 8px; border-left: 1px dotted #8a8a8a; }
.nrow.child { padding-left: 42px; }
.nrow.child::after { content: ""; position: absolute; left: 30px; top: 0; height: 8px; width: 11px; border-left: 1px dotted #8a8a8a; border-bottom: 1px dotted #8a8a8a; }
.nrow:not(.child)::after { content: ""; position: absolute; left: 11px; top: 8px; width: 10px; border-bottom: 1px dotted #8a8a8a; }
.nrow.child:not(.last) { background: repeating-linear-gradient(#8a8a8a 0 1px, transparent 1px 2px) 30px 0 / 1px 100% no-repeat; }
.exp { position: absolute; left: 7px; top: 3px; z-index: 1; width: 9px; height: 9px; box-sizing: border-box; border: 1px solid #8a94a0; background: #f4f4ee; font: 700 9px/7px "Liberation Mono"; text-align: center; color: #222; }
.folder { z-index: 1; }
.ntext { margin-left: 5px; white-space: nowrap; font-size: 12px; height: 16px; line-height: 16px; }
.nic { z-index: 1; }
.ntext.picked { background: #e8e4d6; padding: 0 5px 0 2px; margin-left: 2px; margin-right: 0; }

.main { flex: 1; min-width: 0; display: flex; flex-direction: column; background: #ece9d8; }
.split { flex: 1; min-height: 0; display: flex; padding-left: 6px; }
.tree-col { flex: none; width: 183px; background: #fff; border-left: 1px solid #a0a0a0; border-right: 1px solid #a0a0a0; display: flex; flex-direction: column; }
.search { flex: none; height: 30px; display: flex; align-items: center; background: #ece9d8; margin-left: -1px; margin-right: -1px; padding-left: 1px; }
.search-box { flex: none; width: 155px; height: 23px; box-sizing: border-box; border: 1px solid #8a95a0; border-bottom-width: 2px; background: #fff; color: #8a8a8a; padding-left: 2px; line-height: 19px; margin-top: 3px; }
.lens { margin: 3px 0 0 5px; }
.parts { flex: 1; padding-top: 2px; }
.proot { height: 16px; display: flex; align-items: center; position: relative; padding-left: 22px; gap: 6px; }
.proot .exp { left: 9px; top: 3px; }
.pitem { height: 16px; display: flex; align-items: center; position: relative; padding-left: 44px; }
.pitem::before { content: ""; position: absolute; left: 31px; top: 0; bottom: 0; border-left: 1px dotted #8a8a8a; }
.pitem.lastp::before { bottom: 8px; }
.pitem::after { content: ""; position: absolute; left: 31px; top: 8px; width: 12px; border-bottom: 1px dotted #8a8a8a; }
.gear { width: 14px; height: 14px; flex: none; position: relative; z-index: 1; }
.ptext { margin-left: 3px; padding: 0 3px 0 2px; line-height: 16px; white-space: nowrap; color: #333; }
.ptext.on { background: #316ac5; color: #1c2c70; padding-right: 5px; }

.prop { flex: 1; min-width: 0; background: #fff; display: flex; flex-direction: column; margin-left: 2px; position: relative; border-right: 1px solid #a0a0a0; margin-right: 3px; }
.tabs { flex: none; height: 19px; margin-left: -2px; background: #fff; border-bottom: 1px solid #a0a5a8; display: flex; align-items: flex-end; padding-left: 2px; }
.tab { height: 18px; width: 63px; box-sizing: border-box; border: 1px solid #a0a5a8; border-bottom: 0; border-top: 2px solid #f0a830; border-radius: 3px 3px 0 0; background: #fff; line-height: 16px; text-align: center; position: relative; top: 1px; }
.sheet { flex: 1; margin: 4px 2px 0 5px; border: 1px solid #a8b4c4; border-bottom: 0; overflow: hidden; }
.grid { display: grid; grid-template-columns: 22px 190px 127px 29px; height: 19px; width: 368px; }
.grid > span { box-sizing: border-box; border-right: 1px solid #b6b6b6; border-bottom: 1px solid #b6b6b6; display: flex; align-items: center; white-space: nowrap; }
.head { height: 24px; }
.head > span { background: linear-gradient(#fcfcf8, #e8e6d8); justify-content: center; font-size: 12px; }
.h { color: #222; }
.c-n { background: linear-gradient(90deg, #f6f5ef, #e6e4d6); justify-content: center; color: #333; padding-right: 2px; }
.c-name { padding-left: 19px; position: relative; }
.head .hv { background: linear-gradient(#fad996, #f5bb56); color: #8a0a30; }
.blue { color: #0a0ab0; }
.c-name.ind { padding-left: 29px; }
.c-name.ind::before { content: ""; position: absolute; left: 7px; top: -1px; bottom: 0; border-left: 1px solid #b0b0b0; }
.c-name.ind::after { content: ""; position: absolute; left: 7px; top: 9px; width: 17px; border-top: 1px solid #b0b0b0; }
.c-name.lastind::before { bottom: 9px; }
.c-name.grp { color: #8a8a8a; padding-left: 19px; }
.gexp { position: absolute; left: 3px; top: 3px; width: 11px; height: 11px; box-sizing: border-box; border: 1px solid #b8b8b8; background: #f6f6f0; color: #222; font: 400 11px/9px "Liberation Mono"; text-align: center; font-style: normal; }
.c-val { padding-left: 3px; position: relative; color: #333; }
.c-val.pad { padding-left: 5px; }
.c-add { justify-content: center; }
.chk { width: 13px; height: 13px; box-sizing: border-box; border: 1px solid #1c5180; background: linear-gradient(135deg, #dcdcd7, #fff); display: block; }
.cur .c-n { background: #fdd68e; color: #a03a10; }
.cur .c-name { background: #316ac5; color: #fff; }
.cur .c-name.ind::before, .cur .c-name.ind::after { border-color: #9ab8e8; }
.seltext { background: #316ac5; color: #fff; line-height: 15px; padding-right: 1px; }
.ddbtn { position: absolute; right: 1px; top: 2px; width: 15px; height: 15px; background: #b5c9f0; }
.ddbtn::after { content: ""; position: absolute; left: 3px; top: 3px; width: 5px; height: 5px; border-right: 2px solid #1c3c90; border-bottom: 2px solid #1c3c90; transform: rotate(45deg); }

.param { position: absolute; left: 718px; top: 577px; width: 297px; height: 235px; background: #7d9ae6; box-sizing: border-box; padding: 0 2px 0 4px; display: flex; flex-direction: column; z-index: 2; }
.param-title { flex: none; height: 21px; line-height: 22px; color: #dde6fa; font-size: 12px; font-weight: 700; }
.cad { flex: 1; min-height: 0; width: 291px; height: 214px; background: #000; display: block; }
.cad-text text, .cad-cyan text { font-family: "Noto Sans CJK SC", sans-serif; }

/* browser */
.browser { flex: 1; min-width: 0; display: flex; flex-direction: column; background: #fff; }
.wall { flex: none; height: 21px; overflow: hidden; }
.wall svg { display: block; }
.bmenu { flex: none; height: 30px; box-sizing: border-box; border-bottom: 1px solid #d0d0d0; background: #f3f3f3; display: flex; align-items: center; padding-left: 227px; gap: 17px; font-size: 12px; color: #444; font-family: "Noto Sans CJK SC", sans-serif; white-space: nowrap; }
.bmenu > span { flex: none; }
.gt { width: 0; font: 20px/1 "Liberation Sans"; color: #888; }
.skin { width: 40px; height: 20px; border: 1px solid #c8c8c8; border-right: 0; background: #f8f8f8; display: flex; align-items: center; padding-left: 12px; box-sizing: border-box; margin-left: -5px; margin-top: -8px; }
.addr { flex: none; height: 27px; box-sizing: border-box; background: #fdfdfd; border-bottom: 1px solid #dcdcdc; display: flex; align-items: center; white-space: nowrap; overflow: hidden; }
.url { flex: none; width: 318px; font: 15px "Liberation Sans", sans-serif; color: #a8a8a8; overflow: hidden; margin-left: 1px; }
.url b { font-weight: 400; color: #333; }
.qr { flex: none; margin-left: 7px; }
.bolt { flex: none; margin-left: 6px; }
.addr-sep { flex: none; display: flex; align-items: center; height: 27px; margin-left: 6px; padding: 0 6px 0 5px; width: 14px; border-left: 1px solid #dcdcdc; }
.paw { flex: none; margin-left: 6px; }
.search-hint { flex: none; margin-left: 9px; font-size: 16px; font-family: "Noto Sans CJK SC", sans-serif; color: #aaa; }
.marks { flex: none; height: 37px; background: #f5f5f5; border-bottom: 1px solid #e6e6e6; box-sizing: border-box; display: flex; align-items: center; white-space: nowrap; overflow: hidden; font-size: 12px; color: #444; font-family: "Noto Sans CJK SC", sans-serif; }
.mstub { flex: none; width: 2px; height: 9px; margin-left: 1px; background: #444; }
.m139 { flex: none; margin-left: 9px; }
.mtxt { flex: none; margin-left: 3px; width: 41px; }
.mmore { flex: none; width: 44px; margin-left: 10px; color: #999; font-size: 16px; }
.mdots { flex: none; width: 18px; color: #bbb; font-size: 16px; }
.mk { flex: none; display: flex; align-items: center; gap: 3px; width: 70px; }
.mk .caret { margin-left: 10px; border-top-color: #666; }
.m-bank { width: 69px; }
.btabs { flex: none; height: 27px; background: #ebebeb; border-bottom: 1px solid #b8b8b8; box-sizing: border-box; display: flex; align-items: flex-end; font-size: 12.5px; font-family: "Noto Sans CJK SC", sans-serif; }
.btab-off { flex: none; width: 28px; height: 26px; box-sizing: border-box; background: #e2e2e2; border-right: 1px solid #bbb; border-top: 1px solid #ccc; color: #999; font: 18px/24px "Liberation Sans"; text-align: center; }
.btab { flex: none; width: 221px; height: 27px; margin-bottom: -1px; margin-left: 1px; box-sizing: border-box; background: #fff; border: 1px solid #b8b8b8; border-bottom: 0; border-radius: 4px 4px 0 0; display: flex; align-items: center; padding-left: 10px; color: #333; }
.btab svg { flex: none; }
.btab-text { flex: none; width: 165px; margin-left: 4px; overflow: hidden; white-space: nowrap; }
.btab-x { flex: none; margin-left: 5px; color: #999; font: 18px/1 "Liberation Sans"; }
.btab-plus { flex: none; width: 26px; height: 26px; border-right: 1px solid #c8c8c8; text-align: center; font: 700 22px/24px "Liberation Sans"; color: #777; }
.page { flex: 1; min-height: 0; background: #fff; overflow: hidden; }
.q { display: flex; align-items: center; white-space: nowrap; }
.q1 { height: 25px; padding: 0 0 7px 6px; box-sizing: border-box; border-bottom: 1px dotted #bbb; }
.q2 { height: 34px; padding-left: 5px; border-bottom: 1px solid #ddd; box-sizing: border-box; }
.pencil { flex: none; margin-right: 11px; }
.mark { flex: none; color: #e8b818; font: 700 18px "Liberation Sans"; width: 21px; }
.qa { color: #0a0ac0; font-family: "Noto Sans CJK SC", sans-serif; }
.s13 { font-size: 13px; width: 134px; flex: none; }
.s14 { font-size: 14px; width: 204px; flex: none; }
.coin { flex: none; width: 11px; height: 11px; margin-right: 5px; }
.score { color: #a06040; font-size: 13px; margin-right: 8px; font-family: "Liberation Sans"; }
.q2 .score { margin-right: 7px; font-size: 12px; }
.qtag { color: #333; font-size: 12px; }
.meta { height: 33px; padding-left: 19px; display: flex; align-items: center; color: #999; font-size: 12px; font-family: "Noto Sans CJK SC", sans-serif; white-space: nowrap; }
.meta a { color: #1a3a90; }
.meta i { font-style: normal; margin: 0 14px; color: #888; }
.body { margin: 0 0 0 19px; font: 14px/24px "Noto Sans CJK SC", sans-serif; color: #222; white-space: nowrap; width: 451px; overflow: hidden; height: 48px; }
.sheet-img { margin: 17px 0 0 29px; width: 441px; height: 252px; box-sizing: border-box; border: 1px solid #cfcfcf; border-right: 0; overflow: hidden; position: relative; padding-left: 8px; }
.sheet-img h3 { margin: 0 0 0 244px; width: 250px; white-space: nowrap; font: 400 24px/26px "Liberation Serif", "Noto Sans CJK SC", serif; color: #222; height: 24px; }
.sinfo { height: 17px; display: flex; align-items: center; font: 700 10px "Noto Sans CJK SC", sans-serif; white-space: nowrap; color: #222; padding-left: 2px; }
.sdate { margin-left: 255px; }
.stat { table-layout: fixed; border-collapse: collapse; width: 436px; border: 2px solid #333; font: 10px/1 "Noto Sans CJK SC", "Liberation Sans", sans-serif; color: #333; }
.w55 { width: 55px; } .w46 { width: 46px; } .w45 { width: 45px; } .w58 { width: 58px; }
.stat th, .stat td { border: 1px solid #555; height: 14px; padding: 0; overflow: hidden; white-space: nowrap; }
.stat th { font-weight: 700; height: 14px; }
.stat .num { text-align: right; padding-right: 1px; font-family: "Liberation Mono", monospace; font-size: 9.5px; }
.ctr { text-align: center; }
.answer { margin: 20px 0 0 19px; height: 240px; background: #e1effb; border-top: 1px solid #b8cde4; border-left: 1px solid #cfe0f0; box-sizing: border-box; padding-left: 8px; }
.ans-head { height: 25px; display: flex; align-items: center; gap: 6px; font: 12px "Noto Sans CJK SC", sans-serif; color: #444; padding-top: 2px; box-sizing: border-box; }
.ans-head svg { margin-left: 1px; }
.ans-box { height: 215px; background: #fff; border-top: 1px solid #a8c4e0; border-left: 1px solid #a8c4e0; padding: 7px 0 0 5px; color: #c0c0c0; font: 12px "Noto Sans CJK SC", sans-serif; white-space: nowrap; }

.marks-layer { position: absolute; left: 0; top: 0; width: 1488px; height: 812px; pointer-events: none; z-index: 5; }
</style>
